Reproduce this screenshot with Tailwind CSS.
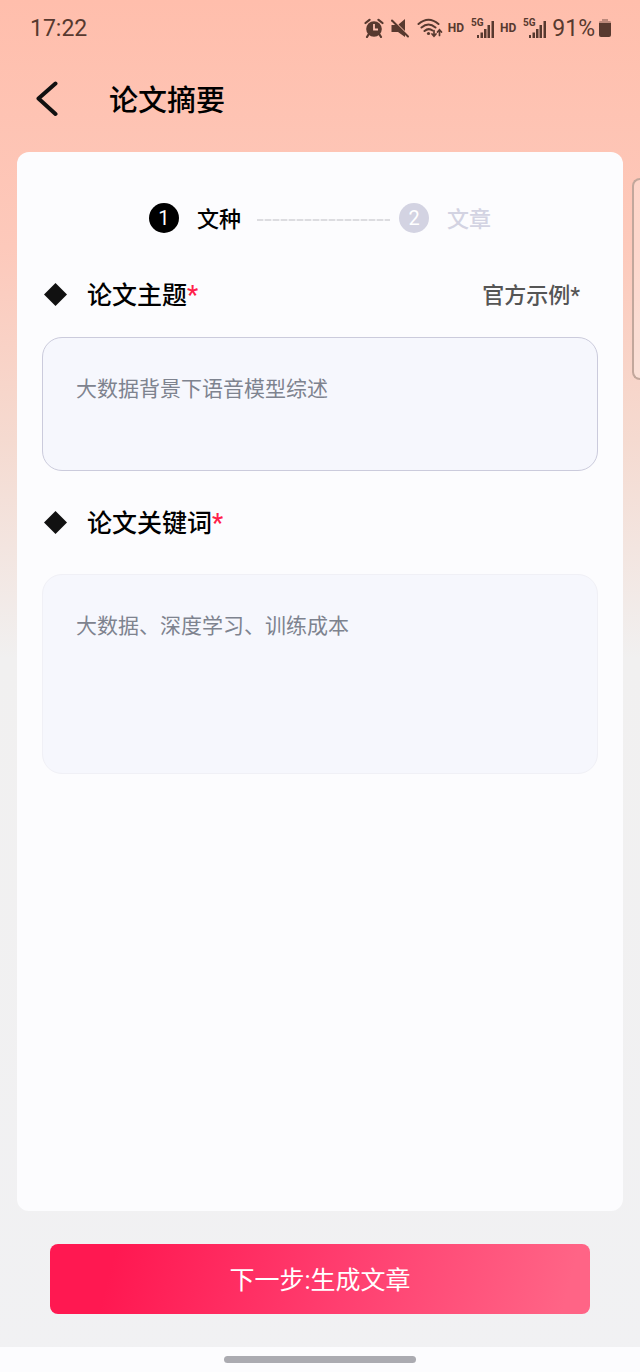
<!DOCTYPE html>
<html lang="zh-CN">
<head>
<meta charset="utf-8">
<meta name="viewport" content="width=device-width, initial-scale=1">
<title>论文摘要</title>
<script src="https://cdn.jsdelivr.net/npm/@tailwindcss/browser@4"></script>
</head>
<body class="relative flex min-h-screen flex-col overflow-x-hidden bg-[linear-gradient(to_bottom,#ffbeac_0%,#fdc9bb_18%,#f5dad0_32%,#f1f0f0_48%,#f1f1f3_100%)] font-['Roboto','Noto_Sans_CJK_SC',sans-serif] text-black">

  <!-- Status bar -->
  <div class="flex h-14 items-center justify-between pr-7 pl-[30px] text-[#57392f]">
    <span class="pt-[2px] text-[23px] leading-7">17:22</span>
    <div class="flex items-center">
      <svg class="mr-[6px] h-5 w-5" viewBox="0 0 20 20" fill="none" aria-label="闹钟">
        <circle cx="10" cy="11" r="7.800" fill="currentColor"/>
        <path d="M1.500 5 5.500 1.800M18.500 5 14.500 1.800M4.500 16.500 3 19M15.500 16.500 17 19" stroke="currentColor" stroke-width="2.200" stroke-linecap="round"/>
        <path d="M10 6v5.500h4" stroke="#ffc2b2" stroke-width="1.800"/>
      </svg>
      <svg class="mr-[7px] h-5 w-5" viewBox="0 0 20 20" fill="none" aria-label="静音">
        <path d="M1.500 7h4.500l9 9v3l-7-5H1.500zM8.500 6.500 15 1v12z" fill="currentColor"/>
        <path d="M2 2.500 18 18.500" stroke="currentColor" stroke-width="2" stroke-linecap="round"/>
      </svg>
      <svg class="mr-[5px] h-5 w-[26px]" viewBox="0 0 26 20" fill="none" stroke="currentColor" stroke-width="2" stroke-linecap="round" aria-label="无线网络">
        <path d="M1.500 6Q11.500-2.500 21.500 6M4.500 9.500Q11.500 3.500 18.500 9.500M7.500 13Q11.500 9.500 15.500 12.500"/>
        <circle cx="11.500" cy="15.500" r="1.600" fill="currentColor" stroke="none"/>
        <path d="M17 12.500v5.500M15 16l2 2.200 2-2.200M22.500 17.500V12M20.500 14l2-2.200 2 2.200" stroke-width="1.700"/>
      </svg>
      <span class="mr-[7px] text-xs font-bold">HD</span>
      <svg class="mr-[5px] h-[22px] w-6" viewBox="0 0 24 22" fill="currentColor" aria-label="5G 信号">
        <text x="0" y="9" font-size="10" font-weight="700">5G</text>
        <path d="M6 18h2v3H6zM9.500 15.500H12V21H9.500zM13 12h2.500v9H13zM16.500 8H19v13h-2.500zM20.500 4H23v17h-2.500z"/>
      </svg>
      <span class="mr-[7px] text-xs font-bold">HD</span>
      <svg class="mr-[5px] h-[22px] w-6" viewBox="0 0 24 22" fill="currentColor" aria-label="5G 信号">
        <text x="0" y="9" font-size="10" font-weight="700">5G</text>
        <path d="M6 18h2v3H6zM9.500 15.500H12V21H9.500zM13 12h2.500v9H13zM16.500 8H19v13h-2.500zM20.500 4H23v17h-2.500z"/>
      </svg>
      <span class="mr-[3px] pt-[2px] text-[23px] leading-7">91%</span>
      <svg class="h-5 w-[14px]" viewBox="0 0 14 20" fill="currentColor" aria-label="电池">
        <path d="M4 1h6v2h2q1 0 1 2H1q0-2 1-2h2z" opacity=".4"/>
        <path d="M1 5h12v12q0 2-2 2H3q-2 0-2-2z"/>
      </svg>
    </div>
  </div>

  <header class="flex h-24 items-center gap-12 pb-[10px] pl-[34px]">
    <button type="button" aria-label="返回" class="flex">
      <svg class="h-9 w-[27px]" viewBox="0 0 27 36" fill="none" stroke="#111" stroke-width="4" stroke-linecap="round" stroke-linejoin="round">
        <path d="M21.500 2.500 4.500 17.500l17 15.500"/>
      </svg>
    </button>
    <h1 class="pt-1 text-[29px] leading-10 font-medium">论文摘要</h1>
  </header>

  <main class="mx-[17px] flex grow flex-col rounded-xl bg-[#fcfcfe] px-[25px]">
    <ol class="mt-[50px] flex h-8 items-center justify-center text-[22px] leading-8 font-medium">
      <li class="flex items-center gap-[18px]">
        <span class="flex size-[30px] items-center justify-center rounded-full bg-black text-xl font-normal text-white">1</span>
        <span class="pt-1">文种</span>
      </li>
      <li aria-hidden="true" class="mr-[9px] ml-4 w-[133px] pt-1"><div class="h-[2px] bg-[repeating-linear-gradient(to_right,#dcdce0_0px,#dcdce0_6px,#f0f0f3_6px,#f0f0f3_8px)]"></div></li>
      <li class="flex items-center gap-[18px] text-[#d3d3e2]">
        <span class="flex size-[30px] items-center justify-center rounded-full bg-[#d3d3e2] text-xl font-normal text-white">2</span>
        <span class="pt-1">文章</span>
      </li>
    </ol>

    <div class="mt-[42px] flex h-9 items-center">
      <svg class="mr-5 ml-[2px] size-[23px]" viewBox="0 0 23 23" fill="#111" aria-hidden="true"><path d="M11.500 0 23 11.500 11.500 23 0 11.500z"/></svg>
      <label for="topic" class="pt-1 text-[25px] leading-9 font-medium">论文主题<span class="text-[#ff1f4b]">*</span></label>
      <a href="#" class="mr-[18px] ml-auto pt-1 text-[22px] leading-9 font-medium text-[#555]">官方示例*</a>
    </div>
    <textarea id="topic" placeholder="大数据背景下语音模型综述" class="mt-[25px] block h-[134px] w-full resize-none rounded-[20px] border border-[#cbcbdc] bg-[#f6f7fd] px-[33px] py-[35px] text-[21px] leading-8 outline-none placeholder:text-[#7e838f]"></textarea>

    <div class="mt-[33px] flex h-9 items-center">
      <svg class="mr-5 ml-[2px] size-[23px]" viewBox="0 0 23 23" fill="#111" aria-hidden="true"><path d="M11.500 0 23 11.500 11.500 23 0 11.500z"/></svg>
      <label for="keywords" class="pt-1 text-[25px] leading-9 font-medium">论文关键词<span class="text-[#ff1f4b]">*</span></label>
    </div>
    <textarea id="keywords" placeholder="大数据、深度学习、训练成本" class="mt-[34px] block h-[200px] w-full resize-none rounded-[20px] border border-[#f0f0f6] bg-[#f6f7fd] px-[33px] py-[35px] text-[21px] leading-8 outline-none placeholder:text-[#7e838f]"></textarea>
  </main>

  <div class="px-[50px] py-[33px]">
    <button type="button" class="h-[70px] w-full rounded-lg bg-[linear-gradient(105deg,#ff1851_12%,#ff3f70_55%,#ff6486_95%)] pt-1 text-[25px] leading-9 text-white">下一步:生成文章</button>
  </div>

  <div class="flex h-[25px] items-center justify-center bg-[#fcfcfe]">
    <div class="h-[7px] w-[192px] rounded-full bg-[#ababb1]"></div>
  </div>

  <!-- Edge panel handle over the right side of the screen -->
  <div class="absolute top-[178px] right-0 h-[202px] w-2 rounded-l-lg border-y-2 border-l-2 border-[#c2a79c] bg-white/25"></div>
</body>
</html>
